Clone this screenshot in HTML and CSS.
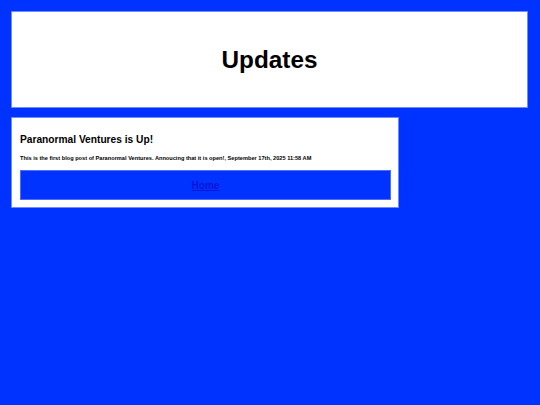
FILE: index.html
```html
<!DOCTYPE html>
<html lang="en">
<head>
<meta charset="utf-8">
<title>Updates</title>
<link rel="stylesheet" href="styles.css">
</head>
<body>
<div class="page">
  <header class="banner">
    <h1 class="banner-title">Updates</h1>
  </header>
  <article class="post">
    <h2 class="post-title">Paranormal Ventures is Up!</h2>
    <p class="post-body">This is the first blog post of Paranormal Ventures. Annoucing that it is open!, September 17th, 2025 11:58 AM</p>
    <nav class="home-bar">
      <a class="home-link" href="#">Home</a>
    </nav>
  </article>
</div>
</body>
</html>
```

FILE: styles.css
```css
html, body {
  margin: 0;
  padding: 0;
  background: #0033ff;
  font-family: "Liberation Sans", Arial, sans-serif;
}

.page {
  display: flex;
  flex-direction: column;
  align-items: flex-start;
  gap: 9px;
  padding: 11px 12px 11px 11px;
  min-height: 383px;
}

.banner {
  box-sizing: border-box;
  width: 517px;
  height: 97px;
  background: #ffffff;
  border: 1px solid #6f8cff;
  display: flex;
  align-items: center;
  justify-content: center;
}

.banner-title {
  margin: 0;
  font-size: 24.3px;
  font-weight: bold;
  color: #000;
  line-height: 28px;
}

.post {
  box-sizing: border-box;
  width: 388px;
  background: #ffffff;
  border: 1px solid #6f8cff;
  padding: 16px 7px 7px 8px;
}

.post-title {
  margin: 0;
  font-size: 10.2px;
  font-weight: bold;
  line-height: 12px;
  color: #000;
}

.post-body {
  margin: 9px 0 0 0;
  font-size: 5.65px;
  font-weight: bold;
  line-height: 7px;
  color: #000;
}

.home-bar {
  box-sizing: border-box;
  margin-top: 8px;
  height: 30px;
  background: #0033ff;
  border: 1px solid #4d6dff;
  display: flex;
  align-items: center;
  justify-content: center;
}

.home-link {
  font-size: 10px;
  font-weight: bold;
  color: #0a14d6;
  text-decoration: underline;
}
```
